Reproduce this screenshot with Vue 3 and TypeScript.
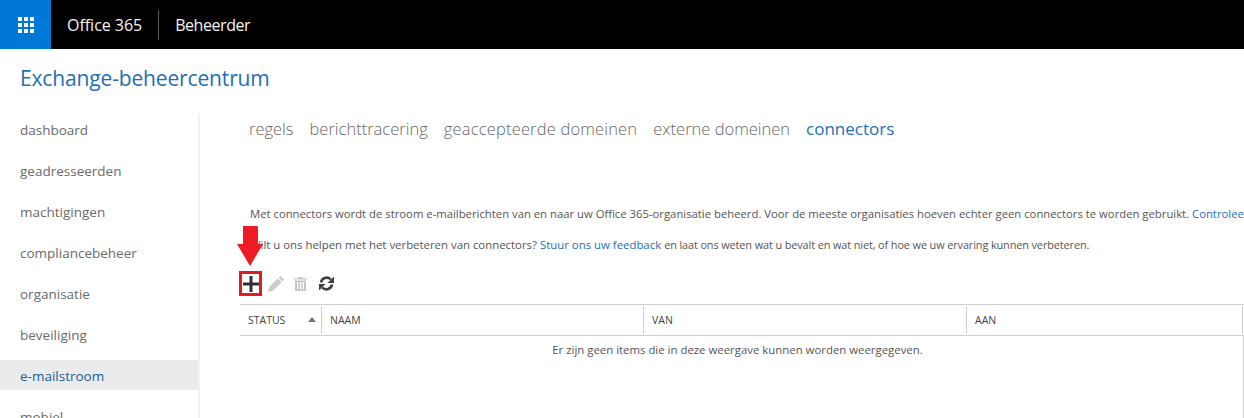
<script setup lang="ts">
const navItems = ['dashboard', 'geadresseerden', 'machtigingen', 'compliancebeheer', 'organisatie', 'beveiliging', 'e-mailstroom', 'mobiel']
const tabs = ['regels', 'berichttracering', 'geaccepteerde domeinen', 'externe domeinen', 'connectors']
const columns = [
  { label: 'NAAM', cls: 'naam' },
  { label: 'VAN', cls: 'van' },
  { label: 'AAN', cls: 'aan' },
]
</script>

<template>
  <div class="page">
    <header class="topbar">
      <div class="launcher">
        <svg width="16" height="16" viewBox="0 0 16 16" fill="#fff">
          <rect v-for="c in 9" :key="c" :x="((c - 1) % 3) * 6" :y="Math.floor((c - 1) / 3) * 6" width="4" height="4" />
        </svg>
      </div>
      <span class="brand">Office 365</span>
      <span class="divider"></span>
      <span class="brand role">Beheerder</span>
    </header>
    <h1 class="title">Exchange-beheercentrum</h1>
    <div class="body">
      <nav class="sidebar">
        <a v-for="item in navItems" :key="item" class="nav-item" :class="{ active: item === 'e-mailstroom' }">{{ item }}</a>
      </nav>
      <main class="content">
        <div class="tabs">
          <a v-for="t in tabs" :key="t" class="tab" :class="{ active: t === 'connectors' }">{{ t }}</a>
        </div>
        <p class="intro first">Met connectors wordt de stroom e-mailberichten van en naar uw Office 365-organisatie beheerd. Voor de meeste organisaties hoeven echter geen connectors te worden gebruikt. <a class="link">Controleer of dit voor uw organisatie geldt.</a></p>
        <p class="intro second">Wilt u ons helpen met het verbeteren van connectors? <a class="link">Stuur ons uw feedback</a> <span class="rest">en laat ons weten wat u bevalt en wat niet, of hoe we uw ervaring kunnen verbeteren.</span></p>
        <div class="toolbar">
          <span class="add-box">
            <svg width="16" height="16" viewBox="0 0 16 16"><path d="M6.500 0h3v6.500H16v3H9.500V16h-3V9.500H0v-3h6.500z" fill="#2f2f2f" /></svg>
          </span>
          <svg class="tool pencil" width="16" height="16" viewBox="0 0 16 16"><path d="M12.600-.2L16.200 3.400l-1.800 2-3.700-3.700zM9.800 2.500l3.800 3.800-8.300 8.300L0 16l1.400-5.200z" fill="#cbcbcb" /></svg>
          <svg class="tool trash" width="13" height="14" viewBox="0 0 13 14"><path d="M4.500 0h4v1.200H13v1.300H0V1.200h4.500zM1 3.500h11V14H1zM3 5v7.500h1.300V5zm2.900 0v7.500h1.300V5zm2.800 0v7.500H10V5z" fill="#c6c6c6" fill-rule="evenodd" /></svg>
          <svg class="tool refresh" width="15" height="15" viewBox="0 0 15 15">
            <path d="M2 6.500A5.600 5.600 0 0 1 11.700 3.500M13 8.500A5.600 5.600 0 0 1 3.300 11.500" fill="none" stroke="#404040" stroke-width="2.600" />
            <path d="M15 .5V7H8.500zM0 14.500V8h6.500z" fill="#404040" />
          </svg>
        </div>
        <div class="table">
          <div class="thead">
            <div class="th status">STATUS<span class="sort"></span></div>
            <div v-for="c in columns" :key="c.label" class="th" :class="c.cls">{{ c.label }}</div>
          </div>
          <div class="empty">Er zijn geen items die in deze weergave kunnen worden weergegeven.</div>
        </div>
      </main>
    </div>
    <svg class="arrow" width="26" height="40" viewBox="0 0 26 40"><path d="M6 0h14a1 1 0 0 1 1 1v17h5L13 40 0 18h6z" fill="#ed1c24" /></svg>
  </div>
</template>

<style>
html, body { margin: 0; overflow: hidden; background: #fff; }
</style>

<style scoped>
.page {
  position: relative;
  width: 1244px;
  height: 418px;
  overflow: hidden;
  font-family: "Open Sans", "Noto Sans", sans-serif;
  color: #666;
}
.topbar {
  display: flex;
  align-items: center;
  height: 49px;
  background: #000;
  color: #f4f4f4;
}
.launcher {
  display: flex;
  align-items: center;
  justify-content: center;
  width: 51px;
  height: 49px;
  background: #0078d7;
  margin-right: 16px;
}
.brand { font-size: 16px; letter-spacing: -0.03px; }
.role { letter-spacing: -0.45px; }
.divider {
  width: 1px;
  height: 30px;
  background: #5a5a5a;
  margin: 0 16px;
}
.title {
  margin: 0;
  padding: 15px 0 0 20px;
  height: 48px;
  box-sizing: border-box;
  font-size: 21px;
  font-weight: 400;
  line-height: 28px;
  color: #1e6fb5;
  letter-spacing: -0.15px;
}
.body { display: flex; height: 321px; }
.sidebar {
  width: 198px;
  flex: none;
  border-right: 2px solid #f2f2f2;
  margin-top: 17px;
}
.nav-item {
  display: flex;
  align-items: center;
  height: 30px;
  box-sizing: border-box;
  padding: 1px 0 0 20px;
  margin-bottom: 11px;
  font-size: 13.500px;
  color: #6a6a6a;
}
.nav-item.active { background: #eaebec; color: #1e6097; }
.content { flex: 1; min-width: 0; padding-left: 40px; }
.tabs { display: flex; gap: 16px; padding: 20px 0 0 9px; height: 31px; }
.tab { font-size: 16.500px; font-weight: 300; line-height: 24px; color: #666; white-space: nowrap; }
.tab:nth-child(3) { letter-spacing: 0.18px; }
.tab.active { color: #1e6fb5; font-weight: 400; font-size: 17px; }
.intro {
  margin: 0;
  padding-left: 10px;
  font-size: 11.300px;
  line-height: 16px;
  white-space: nowrap;
  color: #555;
}
.first { margin-top: 58px; }
.second { margin-top: 15px; font-size: 11.400px; }
.rest { font-size: 10.900px; letter-spacing: -0.11px; }
.link { color: #1e6fb5; }
.toolbar { display: flex; align-items: center; margin-top: 18px; height: 25px; margin-left: -1px; }
.add-box {
  display: flex;
  align-items: center;
  justify-content: center;
  width: 23px;
  height: 25px;
  box-sizing: border-box;
  border: 3px solid #e01b24;
}
.pencil { margin-left: 6px; }
.trash { margin-left: 10px; }
.refresh { margin-left: 12px; }
.table { margin-top: 8px; width: 1004px; }
.thead {
  display: flex;
  height: 32px;
  box-sizing: border-box;
  padding: 1px 1px 1px 0;
  border-top: 1px solid #cfcfcf;
  border-bottom: 1px solid #cfcfcf;
}
.th {
  display: flex;
  align-items: center;
  padding-left: 8px;
  box-sizing: border-box;
  font-size: 10.500px;
  color: #444;
  border-right: 1px solid #cfcfcf;
}
.th:last-child { flex: 1; }
.status { width: 82px; position: relative; }
.naam { width: 322px; }
.van { width: 323px; }
.sort {
  position: absolute;
  right: 5px;
  top: 11px;
  border-left: 4px solid transparent;
  border-right: 4px solid transparent;
  border-bottom: 5px solid #777;
}
.empty {
  height: 83px;
  box-sizing: border-box;
  border-right: 1px solid #cfcfcf;
  text-align: center;
  font-size: 11.400px;
  line-height: 16px;
  padding: 6px 8px 0 0;
  color: #555;
}
.arrow { position: absolute; left: 237px; top: 226px; }
</style>
